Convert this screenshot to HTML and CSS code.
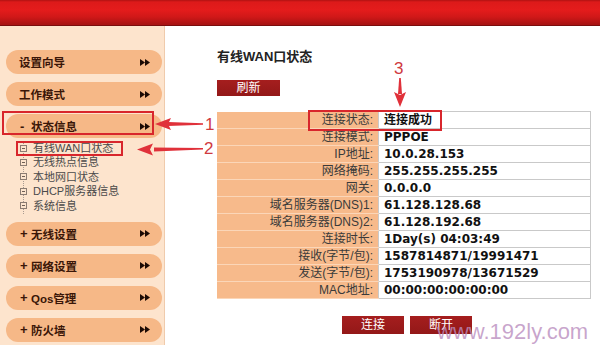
FILE: index.html
```html
<!DOCTYPE html>
<html lang="zh-CN">
<head>
<meta charset="utf-8">
<title>有线WAN口状态</title>
<link rel="stylesheet" href="styles.css">
</head>
<body>
<div class="page">
  <div class="topbar"></div>
  <div class="layout">
    <nav class="side">
      <div class="pill"><span class="label">设置向导</span><svg class="ff" viewBox="0 0 10 7"><polygon points="0,0 5,3.5 0,7"/><polygon points="5,0 10,3.5 5,7"/></svg></div>
      <div class="pill"><span class="label">工作模式</span><svg class="ff" viewBox="0 0 10 7"><polygon points="0,0 5,3.5 0,7"/><polygon points="5,0 10,3.5 5,7"/></svg></div>
      <div class="pill"><span class="label"><span class="sign">-</span>状态信息</span><svg class="ff" viewBox="0 0 10 7"><polygon points="0,0 5,3.5 0,7"/><polygon points="5,0 10,3.5 5,7"/></svg></div>
      <ul class="sub">
        <li>有线WAN口状态</li>
        <li>无线热点信息</li>
        <li>本地网口状态</li>
        <li>DHCP服务器信息</li>
        <li>系统信息</li>
      </ul>
      <div class="pill"><span class="label"><span class="sign">+</span>无线设置</span><svg class="ff" viewBox="0 0 10 7"><polygon points="0,0 5,3.5 0,7"/><polygon points="5,0 10,3.5 5,7"/></svg></div>
      <div class="pill"><span class="label"><span class="sign">+</span>网络设置</span><svg class="ff" viewBox="0 0 10 7"><polygon points="0,0 5,3.5 0,7"/><polygon points="5,0 10,3.5 5,7"/></svg></div>
      <div class="pill"><span class="label"><span class="sign">+</span>Qos管理</span><svg class="ff" viewBox="0 0 10 7"><polygon points="0,0 5,3.5 0,7"/><polygon points="5,0 10,3.5 5,7"/></svg></div>
      <div class="pill"><span class="label"><span class="sign">+</span>防火墙</span><svg class="ff" viewBox="0 0 10 7"><polygon points="0,0 5,3.5 0,7"/><polygon points="5,0 10,3.5 5,7"/></svg></div>
    </nav>
    <main class="main">
      <h1 class="title">有线WAN口状态</h1>
      <button class="btn">刷新</button>
      <table class="status">
        <tr><td class="k">连接状态:</td><td class="v">连接成功</td></tr>
        <tr><td class="k">连接模式:</td><td class="v">PPPOE</td></tr>
        <tr><td class="k">IP地址:</td><td class="v">10.0.28.153</td></tr>
        <tr><td class="k">网络掩码:</td><td class="v">255.255.255.255</td></tr>
        <tr><td class="k">网关:</td><td class="v">0.0.0.0</td></tr>
        <tr><td class="k">域名服务器(DNS)1:</td><td class="v">61.128.128.68</td></tr>
        <tr><td class="k">域名服务器(DNS)2:</td><td class="v">61.128.192.68</td></tr>
        <tr><td class="k">连接时长:</td><td class="v">1Day(s) 04:03:49</td></tr>
        <tr><td class="k">接收(字节/包):</td><td class="v">1587814871/19991471</td></tr>
        <tr><td class="k">发送(字节/包):</td><td class="v">1753190978/13671529</td></tr>
        <tr><td class="k">MAC地址:</td><td class="v">00:00:00:00:00:00</td></tr>
      </table>
      <div class="actions">
        <button class="btn wide">连接</button>
        <button class="btn wide">断开</button>
      </div>
    </main>
  </div>

  <svg class="notes" viewBox="0 0 600 345" width="600" height="345">
    <g fill="none" stroke="#d8262c" stroke-width="2">
      <rect x="3" y="112" width="150" height="22"/>
      <rect x="17" y="142" width="105" height="13"/>
      <rect x="309" y="111" width="132" height="19"/>
    </g>
    <g fill="#e0313a">
      <polygon points="203,123.2 203,124.8 168,126 168,122"/>
      <polygon points="155,124 171,118 168,124 171,130"/>
      <polygon points="203,148 203,149.6 154,151.5 154,147.5"/>
      <polygon points="137,149.5 153,143.5 150,149.5 153,155.5"/>
      <polygon points="399.2,78 400.8,78 402,94 398,94"/>
      <polygon points="400,107 394,92 400,95 406,92"/>
    </g>
    <g class="num" fill="#cf3a3f">
      <text x="205" y="130">1</text>
      <text x="204" y="154">2</text>
      <text x="394" y="74">3</text>
    </g>
  </svg>
  <div class="wm">www.192ly.com</div>
</div>
</body>
</html>
```

FILE: styles.css
```css
html, body {
  margin: 0;
  padding: 0;
  background: #fff;
}

body {
  font-family: "Liberation Sans", "Noto Sans CJK SC", sans-serif;
  color: #333;
}

.page {
  position: relative;
  width: 600px;
  height: 345px;
  overflow: hidden;
}

.topbar {
  height: 25px;
  background: linear-gradient(#b01212 0, #dd1a1a 2px, #e41c1c 10px, #d01818 17px, #a91313 24px);
  border-bottom: 1px solid #7a0d0d;
}

.layout {
  display: flex;
  height: 319px;
}

.side {
  width: 165px;
  flex: none;
  box-sizing: border-box;
  border-right: 1px solid #f0cbac;
  background: #fde4cd;
  padding: 24px 0 0 6px;
  display: flex;
  flex-direction: column;
  gap: 8px;
}

.pill {
  width: 156px;
  height: 24px;
  flex: none;
  box-sizing: border-box;
  border-radius: 12px;
  background: #f6b887;
  display: flex;
  align-items: center;
  justify-content: space-between;
  padding: 0 12px 0 13px;
  font-family: "Liberation Sans", "Noto Sans CJK SC", sans-serif;
  font-weight: bold;
  font-size: 11.5px;
  color: #3a1608;
}

.label {
  display: flex;
  align-items: center;
}

.sign {
  display: inline-block;
  width: 11px;
  margin-left: 1px;
  font-size: 13px;
}

.ff {
  width: 10px;
  height: 7px;
  fill: #1c0a04;
}

.sub {
  list-style: none;
  margin: -5px 0 0 0;
  padding: 0 0 1px 0;
  font-size: 11px;
  line-height: 14.4px;
  color: #4a4a4a;
  background-image: linear-gradient(#a89a90 50%, transparent 50%);
  background-size: 1px 2px;
  background-repeat: repeat-y;
  background-position: 17px 0;
}

.sub li {
  display: flex;
  align-items: center;
  height: 14.4px;
}

.sub li::before {
  content: "";
  flex: none;
  width: 7px;
  height: 7px;
  box-sizing: border-box;
  margin: 0 6px 0 14px;
  border: 1px solid #8c7c72;
  background: #fde4cd linear-gradient(#6e5e54, #6e5e54) center / 3px 1px no-repeat;
}

.main {
  flex: 1;
  padding: 23px 0 0 52px;
}

.title {
  margin: 0;
  font-size: 13px;
  line-height: 16px;
  font-weight: bold;
  color: #222;
}

.btn {
  display: block;
  margin: 15px 0 0 0;
  width: 63px;
  height: 16px;
  padding: 0;
  border: none;
  background: linear-gradient(#a51e1e, #931818);
  color: #fff;
  font-family: "Liberation Sans", "Noto Sans CJK SC", sans-serif;
  font-size: 12px;
  line-height: 16px;
}

.status {
  margin-top: 15px;
  width: 374px;
  border-collapse: collapse;
  font-size: 12px;
}

.status td {
  padding: 0;
  height: 16px;
  line-height: 16px;
}

.status .k {
  width: 156px;
  padding-right: 5px;
  text-align: right;
  background: #f7ba8b;
  border-bottom: 1px solid #fbd6b8;
  color: #3a3a3a;
}

.status .v {
  padding-left: 5px;
  background: #fff;
  border: 1px solid #c9c9c9;
  border-top: none;
  font-family: "DejaVu Sans", "Noto Sans CJK SC", sans-serif;
  font-weight: bold;
  color: #111;
}

.status tr:first-child .v {
  border-top: 1px solid #c9c9c9;
}

.actions {
  display: flex;
  justify-content: center;
  gap: 6px;
  width: 374px;
  padding-left: 6px;
  box-sizing: border-box;
  margin-top: 17px;
}

.btn.wide {
  margin: 0;
  width: 62px;
  height: 18px;
  line-height: 18px;
}

.notes {
  position: absolute;
  left: 0;
  top: 0;
  pointer-events: none;
}

.num {
  font-family: "Liberation Sans", sans-serif;
  font-size: 17px;
}

.wm {
  position: absolute;
  left: 437px;
  top: 319px;
  font-family: "Liberation Sans", sans-serif;
  font-size: 22px;
  line-height: 26px;
  color: rgba(185, 140, 190, 0.78);
}
```
